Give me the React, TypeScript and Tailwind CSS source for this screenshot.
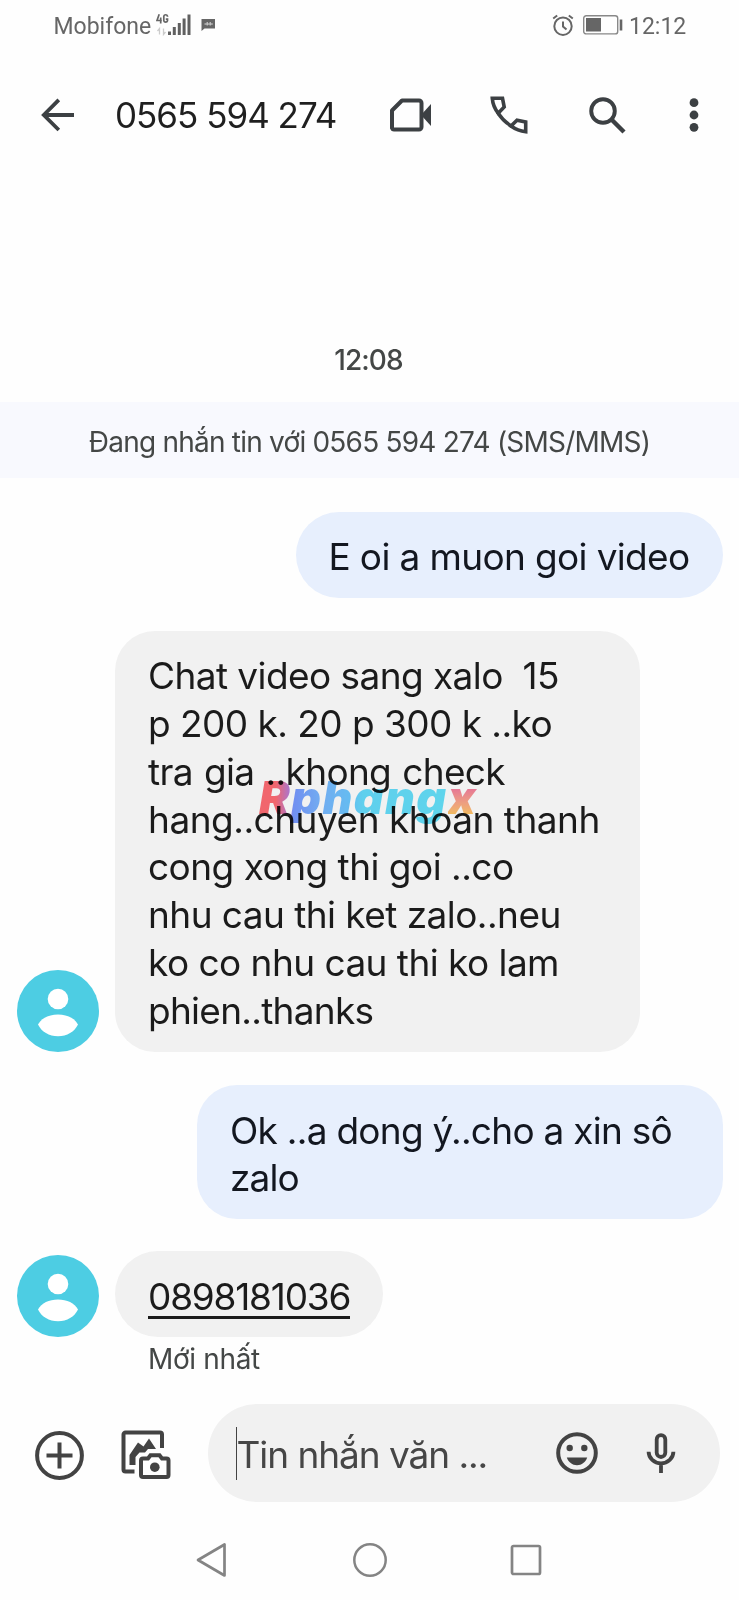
import type { ReactNode } from 'react';

type LineData = { text: string; tracking: string };

const priceLines: LineData[] = [
  { text: 'Chat video sang xalo\u00a0 15', tracking: 'tracking-[-0.57px]' },
  { text: 'p 200 k. 20 p 300 k ..ko', tracking: 'tracking-[-0.54px]' },
  { text: 'tra gia ..khong check', tracking: 'tracking-[-0.68px] [word-spacing:1.5px]' },
  { text: 'hang..chuyen khoan thanh', tracking: 'tracking-[-0.49px]' },
  { text: 'cong xong thi goi ..co', tracking: 'tracking-[-0.52px]' },
  { text: 'nhu cau thi ket zalo..neu', tracking: 'tracking-[-0.55px]' },
  { text: 'ko co nhu cau thi ko lam', tracking: 'tracking-[-0.54px]' },
  { text: 'phien..thanks', tracking: 'tracking-[-0.72px]' },
];

const replyLines: LineData[] = [
  { text: 'Ok ..a dong ý..cho a xin sô', tracking: 'tracking-[-0.73px]' },
  { text: 'zalo', tracking: 'tracking-[-0.9px]' },
];

function Lines({ lines }: { lines: LineData[] }) {
  return (
    <>
      {lines.map((l) => (
        <p key={l.text} className={`whitespace-pre ${l.tracking}`}>{l.text}</p>
      ))}
    </>
  );
}

function Avatar() {
  return (
    <svg viewBox="0 0 82 82" className="size-[82px] shrink-0">
      <circle cx="41" cy="41" r="41" fill="#4dcde3" />
      <circle cx="41" cy="29" r="10.3" fill="#fff" />
      <path d="M21 54.500C24.500 48 32 44.500 41 44.500s16.500 3.500 20 10c-3.500 7.200-11 11.800-20 11.800s-16.500-4.600-20-11.800z" fill="#fff" />
    </svg>
  );
}

function Bubble({ children, className }: { children: ReactNode; className: string }) {
  return (
    <div className={`pl-[33px] pt-[21.500px] text-[37px] leading-[47.85px] ${className}`}>{children}</div>
  );
}

function StatusBar() {
  return (
    <div className="flex h-[50px] items-center pl-[53.500px] pr-[54px] text-[#666]">
      <span className="pt-[3px] font-['Roboto',sans-serif] text-[23px] leading-[47px]">Mobifone</span>
      <svg viewBox="0 0 62 24" className="ml-[5px] h-6 w-[62px]" fill="none" stroke="#666">
        <g fill="#606060" stroke="none">
          <rect x="12" y="18.500" width="3" height="3.500" />
          <rect x="16.800" y="14" width="3" height="8" />
          <rect x="21.800" y="10" width="3" height="12" />
          <rect x="26.600" y="5.500" width="3" height="16.500" />
          <rect x="31.500" y="1.500" width="3" height="20.500" />
        </g>
        <path d="M3.200 1.300 1 7.500h4.800M4.700 4.500v6" strokeWidth="1.700" />
        <path d="M11.500 3.800V3.200A1.900 1.900 0 0 0 7.800 3.200v4.500a1.900 1.900 0 0 0 3.700 0V6.200H9.800" strokeWidth="1.700" />
        <path d="M3.500 21.500v-6L1.500 18M7.500 15.500v6l2-2.500" stroke="#ccc" strokeWidth="1.300" />
        <path d="M45.500 6H59v9.500H48.500L45.500 18z" fill="#666" stroke="none" />
        <path d="M48.500 11h2.300M51.500 11h2.300M54.500 11h2.300M51.200 9v3.500M54.200 9v3.500" stroke="#ddd" strokeWidth="1" />
      </svg>
      <div className="grow" />
      <svg viewBox="0 0 22 22" className="size-[22px]" fill="none" stroke="#666" strokeWidth="2">
        <circle cx="11" cy="12.200" r="8.700" />
        <path d="M11 7.500v5l3.500 3" />
        <path d="M1.200 4.500 5.200 1.500M20.800 4.500l-4-3" />
      </svg>
      <svg viewBox="0 0 40 20" className="ml-[9px] h-5 w-10">
        <rect x="0.700" y="0.700" width="34" height="18.200" rx="2.500" fill="none" stroke="#888" strokeWidth="1.400" />
        <rect x="3" y="3" width="15" height="13.500" fill="#666" />
        <rect x="36.700" y="4.500" width="2.600" height="11" fill="#666" />
      </svg>
      <span className="ml-[6px] w-[56px] whitespace-nowrap pt-[3px] font-['Roboto',sans-serif] text-[23px] leading-[47px]">12:12</span>
    </div>
  );
}

function Header() {
  return (
    <header className="flex h-[130px] items-center pl-[40.500px]">
      <svg viewBox="0 0 34 34" className="size-[34px]" fill="none" stroke="#3c4043" strokeWidth="3.800">
        <path d="M17.800 1.800 2.800 17l15 15M2.800 17H33" />
      </svg>
      <h1 className="ml-[40.500px] w-[225px] whitespace-nowrap text-[35px] font-normal leading-[46px] tracking-[-1px] text-[#1f1f1f]">
        0565 594 274
      </h1>
      <svg viewBox="0 0 42 34" className="ml-[50px] h-[34px] w-[42px]" fill="none" stroke="#3c4043" strokeWidth="4">
        <path d="M2 30V12.500L12 2.500H29a2.500 2.500 0 0 1 2.500 2.500V29a2.500 2.500 0 0 1-2.500 2.500H4A2.200 2.200 0 0 1 2 30z" strokeLinejoin="round" />
        <path d="M31 17 41 6v22z" fill="#3c4043" stroke="none" />
      </svg>
      <svg viewBox="0 0 38 38" className="ml-[58px] size-[38px]" fill="none" stroke="#3c4043" strokeWidth="3.600">
        <path d="M2.300 2.300H12.500L14.200 11 8.200 17.200C5 13 2.700 8 2.300 2.300z" />
        <path d="M35.700 35.700V26L27 24.200 21 30c4.500 3.300 9.500 5.200 14.700 5.700z" />
        <path d="M7.500 16C11 22 16 27 22.500 30.700" />
      </svg>
      <svg viewBox="0 0 37 37" className="ml-[60.500px] size-[37px]" fill="none" stroke="#3c4043" strokeWidth="3.900">
        <circle cx="14" cy="14" r="11.800" />
        <path d="M22.500 22.500 35 35" strokeWidth="4.400" />
      </svg>
      <svg viewBox="0 0 10 34" className="ml-[63.500px] h-[34px] w-[10px]" fill="#3c4043">
        <circle cx="5" cy="4.700" r="4.400" />
        <circle cx="5" cy="17" r="4.400" />
        <circle cx="5" cy="29.300" r="4.400" />
      </svg>
    </header>
  );
}

function Watermark() {
  return (
    <div className="pointer-events-none absolute left-[144px] top-[138px] flex whitespace-nowrap font-['Inter',sans-serif] text-[46px] font-black italic leading-[56px] tracking-[1.5px] opacity-75 mix-blend-multiply">
      <span className="bg-linear-[90deg,#ff3a44_9%,#a050c8_16%,#4a74ff_18%,#4c9dff_32%,#38b4ff_48%,#30d0fa_55%,#30d8f8] bg-clip-text text-transparent">Rphang</span>
      <span className="bg-linear-to-b from-[#f0507c] from-35% to-[#ffb030] to-80% bg-clip-text pr-2 text-transparent">x</span>
    </div>
  );
}

function Composer() {
  return (
    <div className="mt-auto flex h-[98px] items-center pl-[35px] pr-[19px]">
      <svg viewBox="0 0 49 49" className="mt-1 size-[49px]" fill="none" stroke="#434343" strokeWidth="4">
        <circle cx="24.500" cy="24.500" r="22.400" />
        <path d="M24.500 11.500v26M11.500 24.500h26" />
      </svg>
      <svg viewBox="0 0 50 50" className="ml-[37px] mt-1 size-[50px]" fill="none" stroke="#434343" strokeWidth="4">
        <path d="M13.500 41.500H4.500a2 2 0 0 1-2-2V4.500a2 2 0 0 1 2-2H39a2 2 0 0 1 2 2V18" />
        <path d="M8.500 35V25L17 12.500l5.500 4L28 8.500l7 10.500h-8l-3 3.500H18.500L14.500 27v8z" fill="#434343" stroke="none" />
        <path d="M22 28.500h5l2.500-3.200h9l2.500 3.200h4.500a2 2 0 0 1 2 2V45a2 2 0 0 1-2 2H22a2 2 0 0 1-2-2V30.500a2 2 0 0 1 2-2z" />
        <circle cx="33.800" cy="37.200" r="4.800" fill="#434343" stroke="none" />
      </svg>
      <div className="ml-[36.500px] flex h-[98px] w-[512.500px] items-center rounded-full bg-[#f1f1f1] pl-7">
        <div className="h-[53px] w-px bg-[#434343]" />
        <span className="mt-[3px] w-[318px] whitespace-nowrap text-[37px] leading-[48px] tracking-[-1.05px] text-[#464646]">
          Tin nhắn văn ...
        </span>
        <svg viewBox="0 0 42 42" className="ml-px size-[42px]" fill="none" stroke="#434343" strokeWidth="4">
          <circle cx="21" cy="21" r="18.800" />
          <circle cx="13.700" cy="16" r="3.200" fill="#434343" stroke="none" />
          <circle cx="28.300" cy="16" r="3.200" fill="#434343" stroke="none" />
          <path d="M10.800 25.500h20.400c-1.600 4.700-5.500 7.700-10.200 7.700s-8.600-3-10.200-7.700z" fill="#434343" stroke="none" />
        </svg>
        <svg viewBox="0 0 30 40" className="ml-[48px] h-10 w-[30px]" fill="none" stroke="#434343" strokeWidth="3.800">
          <rect x="10.700" y="2.200" width="8.600" height="21.800" rx="4.300" />
          <path d="M2.600 18.800a12.400 11.500 0 0 0 24.800 0M15 30v10" />
        </svg>
      </div>
    </div>
  );
}

function SystemNav() {
  return (
    <nav className="flex h-[98px] items-center pl-[196px] pt-[18px]">
      <svg viewBox="0 0 32 36" className="h-9 w-8" fill="none" stroke="#848484" strokeWidth="2.700" strokeLinejoin="round">
        <path d="M2 18 28.500 2.500v31z" />
      </svg>
      <svg viewBox="0 0 36 36" className="ml-[123.500px] size-9" fill="none" stroke="#848484" strokeWidth="2.500">
        <circle cx="18" cy="18" r="15.700" />
      </svg>
      <svg viewBox="0 0 32 32" className="ml-[122.500px] size-8" fill="none" stroke="#848484" strokeWidth="2.700">
        <rect x="2" y="2" width="28" height="28" rx="1.500" />
      </svg>
    </nav>
  );
}

export default function App() {
  return (
    <div className="flex h-[1600px] w-[739px] flex-col overflow-hidden bg-[#fefefe] font-['Inter','Noto_Sans',sans-serif] text-[#1b1b1b]">
      <StatusBar />
      <Header />
      <main className="flex flex-col">
        <time className="mt-[161.500px] pr-0.5 text-center text-[28px] font-medium leading-[36px] tracking-[-0.9px] text-[#444746]">12:08</time>
        <div className="mt-[24.500px] flex h-[76px] items-center justify-center bg-[#f8f9fe] pt-1 text-[28px] leading-[36px] tracking-[-0.78px] text-[#444746]">
          <span className="whitespace-nowrap">Đang nhắn tin với 0565 594 274 (SMS/MMS)</span>
        </div>
        <Bubble className="ml-[295.500px] mt-[33.500px] h-[86px] w-[427.500px] rounded-[43px] bg-[#e7effd] text-[#131720]">
          <p className="whitespace-nowrap tracking-[-0.64px]">E oi a muon goi video</p>
        </Bubble>
        <div className="mt-[33px] flex items-end pl-[16.500px]">
          <Avatar />
          <div className="relative ml-[16.500px]">
            <Bubble className="h-[421.500px] w-[525px] rounded-[40px] bg-[#f1f1f1]">
              <Lines lines={priceLines} />
            </Bubble>
            <Watermark />
          </div>
        </div>
        <Bubble className="ml-[197px] mt-[33px] h-[133.500px] w-[526px] rounded-[40px] bg-[#e7effd] text-[#131720]">
          <Lines lines={replyLines} />
        </Bubble>
        <div className="mt-[32.500px] flex items-end pl-[16.500px]">
          <Avatar />
          <Bubble className="ml-[16.500px] h-[86px] w-[268px] rounded-[43px] bg-[#f1f1f1]">
            <p className="h-[46.500px] w-[202px] whitespace-nowrap border-b-[3px] border-[#1b1b1b] leading-[48px] tracking-[-1.2px]">0898181036</p>
          </Bubble>
        </div>
        <p className="ml-[148px] mt-[4px] text-[28px] leading-[36px] tracking-[-0.35px] text-[#444746]">Mới nhất</p>
      </main>
      <Composer />
      <SystemNav />
    </div>
  );
}
